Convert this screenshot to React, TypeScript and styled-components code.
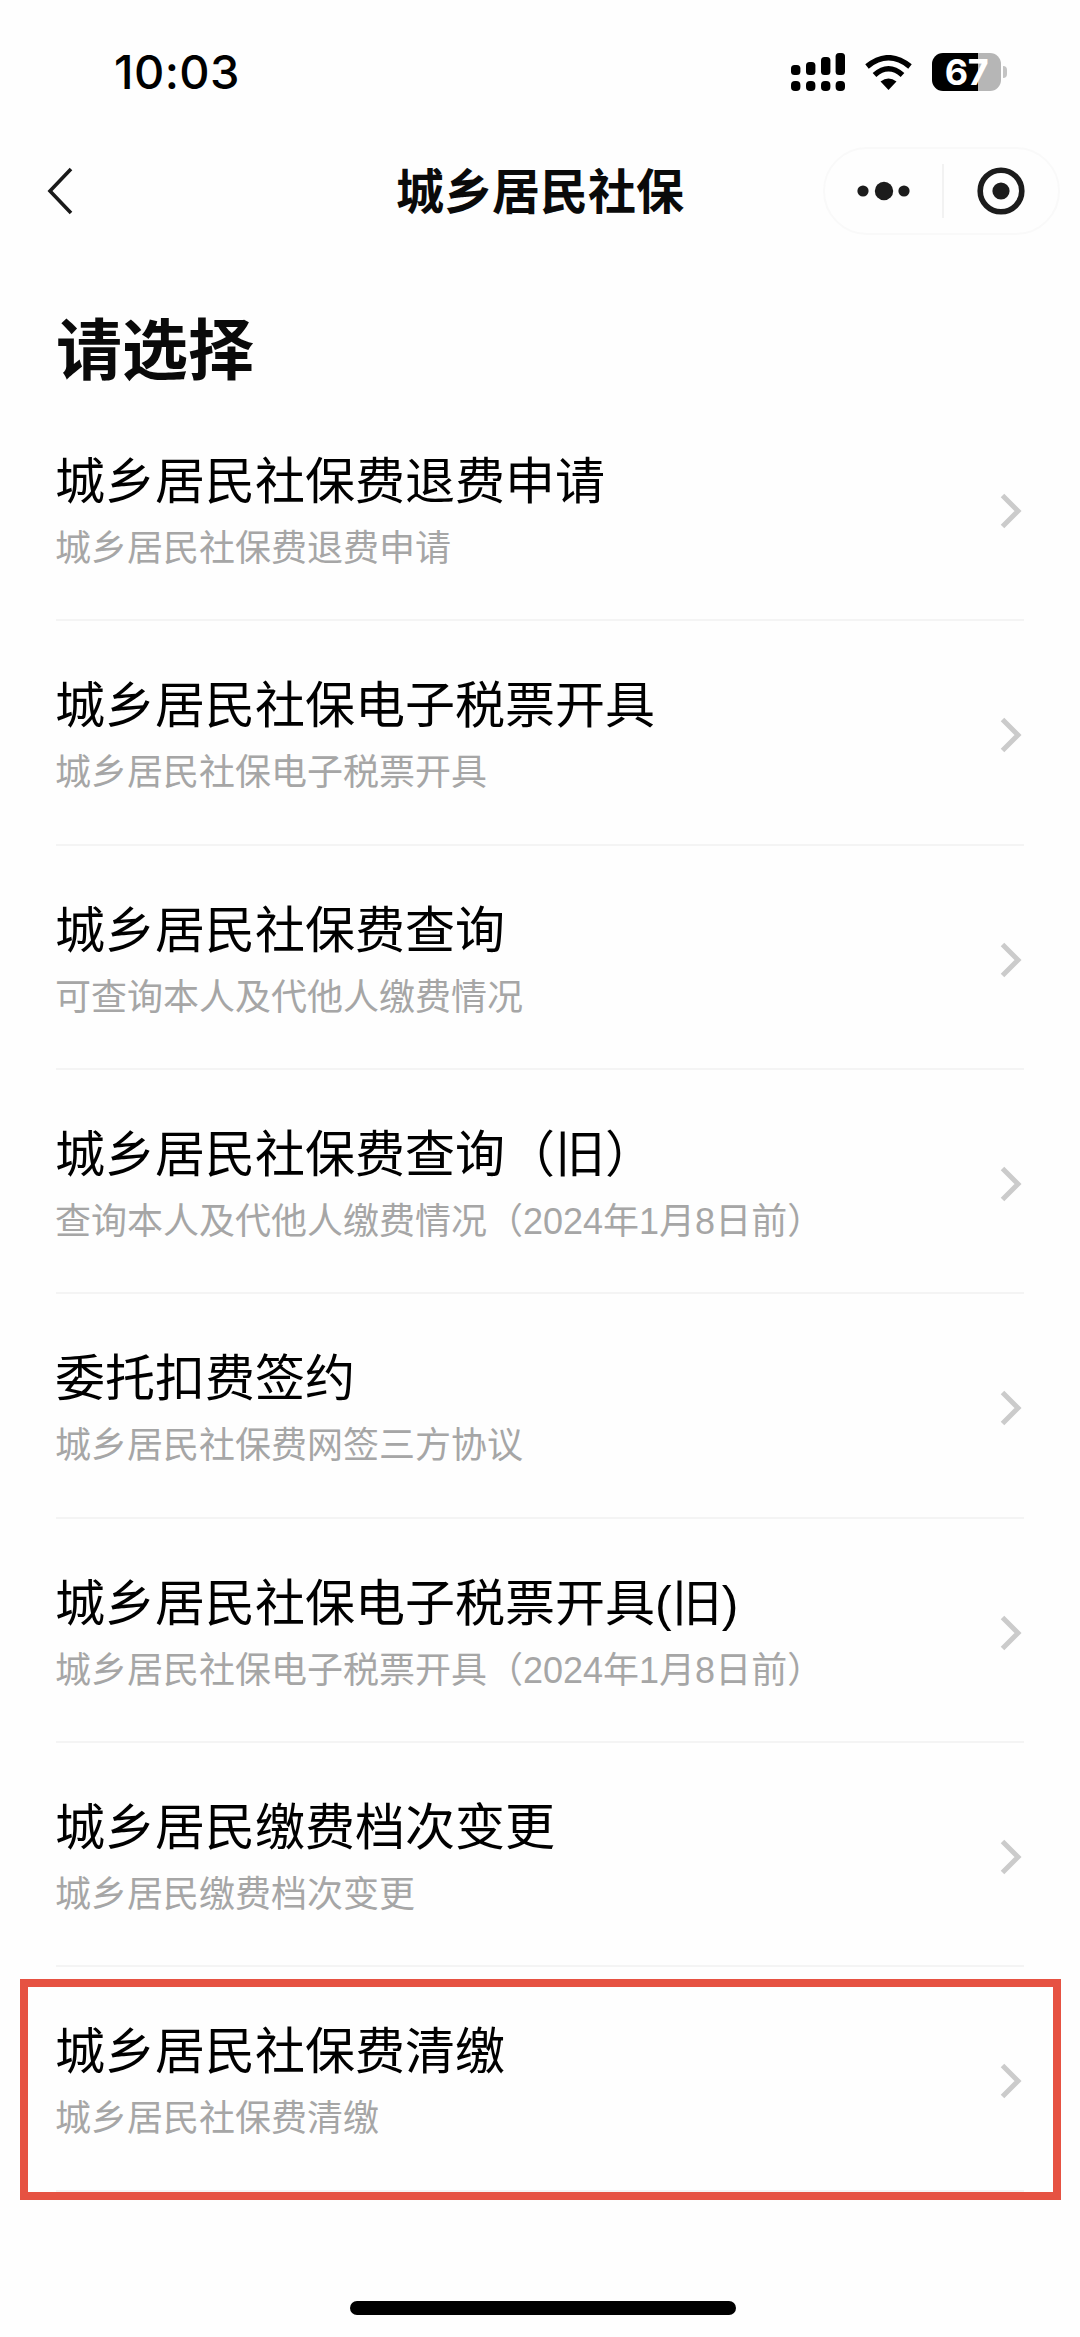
import React from "react";
import styled, { createGlobalStyle } from "styled-components";

const Global = createGlobalStyle`
  html, body { margin: 0; padding: 0; background: #fefefe; }
  * { box-sizing: border-box; }
  body { font-family: "Liberation Sans", "Noto Sans CJK SC", sans-serif; }
`;

const Page = styled.div`
  width: 1080px;
  height: 2337px;
  background: #fefefe;
  overflow: hidden;
  position: relative;
  display: flex;
  flex-direction: column;
`;

const StatusBar = styled.div`
  height: 144px;
  padding: 0 73px 2px 114px;
  display: flex;
  align-items: center;
  justify-content: space-between;
`;

const Time = styled.span`
  font-family: Inter, "Liberation Sans", sans-serif;
  font-size: 47px;
  font-weight: 500;
  letter-spacing: 0.4px;
  color: #000;
`;

const StatusIcons = styled.div`
  display: flex;
  align-items: center;
  gap: 20px;
  margin-top: 2px;
`;

const SignalSvg = styled.svg`
  width: 54px;
  height: 38px;
  display: block;
`;

const WifiSvg = styled.svg`
  width: 47px;
  height: 35px;
  display: block;
`;

const BatteryWrap = styled.div`
  display: flex;
  align-items: center;
  gap: 2px;
`;

const BatteryBody = styled.div<{ $level: number }>`
  width: 69px;
  height: 38px;
  border-radius: 11px;
  background: linear-gradient(90deg, #000 ${(p) => p.$level}%, #b6b6b6 ${(p) => p.$level}%);
  display: flex;
  align-items: center;
  justify-content: center;
  color: #fff;
  font-family: Inter, "Liberation Sans", sans-serif;
  font-size: 36px;
  font-weight: 700;
  letter-spacing: -0.5px;
  line-height: 38px;
`;

const BatteryNub = styled.div`
  width: 4px;
  height: 12px;
  border-radius: 0 6px 6px 0;
  background: #c4c4c4;
`;

const NavBar = styled.div`
  height: 94px;
  padding: 0 20px;
  display: grid;
  grid-template-columns: 1fr auto 1fr;
  align-items: center;
`;

const BackSvg = styled.svg`
  width: 34px;
  height: 52px;
  display: block;
  margin-left: 24px;
`;

const NavTitle = styled.div`
  font-size: 48px;
  font-weight: 700;
  color: #0a0a0a;
  line-height: 60px;
  padding-top: 3px;
`;

const Capsule = styled.div`
  justify-self: end;
  width: 237px;
  height: 88px;
  border: 2px solid #f9f9f9;
  border-radius: 44px;
  display: flex;
  align-items: center;
`;

const MoreCell = styled.div`
  width: 117px;
  display: flex;
  align-items: center;
  justify-content: center;
`;

const CloseCell = styled.div`
  flex: 1;
  display: flex;
  align-items: center;
  justify-content: center;
`;

const CapsuleDivider = styled.div`
  width: 2px;
  height: 54px;
  background: #f2f2f2;
`;

const CapsuleSvg = styled.svg`
  display: block;
`;

const Heading = styled.h1`
  margin: 0;
  height: 159px;
  padding: 71px 0 0 56px;
  font-size: 66px;
  line-height: 84px;
  font-weight: 700;
  color: #0a0a0a;
`;

const List = styled.div`
  display: flex;
  flex-direction: column;
`;

const Row = styled.div`
  position: relative;
  height: 224.33px;
  margin: 0 56px;
  padding: 52px 0 0;
  display: flex;
  align-items: flex-start;
  justify-content: space-between;
  border-bottom: 2px solid #f4f4f4;
`;

const RowText = styled.div`
  display: flex;
  flex-direction: column;
  margin-left: -1px;
`;

const RowTitle = styled.div`
  font-size: 50px;
  line-height: 66px;
  color: #000;
`;

const RowSub = styled.div`
  font-size: 36px;
  line-height: 67px;
  color: #a6a6a6;
`;

const ChevronSvg = styled.svg`
  width: 23px;
  height: 36px;
  display: block;
  margin: 44px 2px 0 0;
  flex-shrink: 0;
`;

const Highlight = styled.div`
  position: absolute;
  left: -36px;
  right: -37px;
  top: 12px;
  height: 221px;
  border: 8px solid #e65242;
  pointer-events: none;
`;

const HomeBar = styled.div`
  position: absolute;
  left: 350px;
  top: 2301px;
  width: 386px;
  height: 14px;
  border-radius: 7px;
  background: #000;
`;

const rows = [
  ["城乡居民社保费退费申请", "城乡居民社保费退费申请"],
  ["城乡居民社保电子税票开具", "城乡居民社保电子税票开具"],
  ["城乡居民社保费查询", "可查询本人及代他人缴费情况"],
  ["城乡居民社保费查询（旧）", "查询本人及代他人缴费情况（2024年1月8日前）"],
  ["委托扣费签约", "城乡居民社保费网签三方协议"],
  ["城乡居民社保电子税票开具(旧)", "城乡居民社保电子税票开具（2024年1月8日前）"],
  ["城乡居民缴费档次变更", "城乡居民缴费档次变更"],
  ["城乡居民社保费清缴", "城乡居民社保费清缴"],
];

export default function App() {
  return (
    <Page>
      <Global />
      <StatusBar>
        <Time>10:03</Time>
        <StatusIcons>
          <SignalSvg viewBox="0 0 54 38">
            <rect x="0" y="12" width="9.4" height="10" rx="3.5" />
            <rect x="15" y="9" width="9.4" height="13" rx="3.5" />
            <rect x="30" y="4" width="9.4" height="18" rx="3.5" />
            <rect x="44.6" y="0" width="9.4" height="22" rx="3.5" />
            <rect x="0" y="28" width="9.4" height="10" rx="4" />
            <rect x="15" y="28" width="9.4" height="10" rx="4" />
            <rect x="30" y="28" width="9.4" height="10" rx="4" />
            <rect x="44.6" y="28" width="9.4" height="10" rx="4" />
          </SignalSvg>
          <WifiSvg viewBox="0 0 47 35">
            <path d="M23.5 35L15.5 26.5Q23.5 20.5 31.5 26.5Z" fill="#000" />
            <path d="M9.5 20Q23.5 7.5 37.5 20" fill="none" stroke="#000" strokeWidth="5.5" />
            <path d="M2 11.5Q23.5 -6 45 11.5" fill="none" stroke="#000" strokeWidth="5.5" />
          </WifiSvg>
          <BatteryWrap>
            <BatteryBody $level={67}>67</BatteryBody>
            <BatteryNub />
          </BatteryWrap>
        </StatusIcons>
      </StatusBar>
      <NavBar>
        <BackSvg viewBox="0 0 34 52">
          <path d="M27 4L6 26L27 48" fill="none" stroke="#1a1a1a" strokeWidth="3.6" />
        </BackSvg>
        <NavTitle>城乡居民社保</NavTitle>
        <Capsule>
          <MoreCell>
            <CapsuleSvg width="54" height="20" viewBox="0 0 54 20">
              <circle cx="6" cy="10" r="5.6" fill="#1c1c1c" />
              <circle cx="27" cy="10" r="9.2" fill="#1c1c1c" />
              <circle cx="47" cy="10" r="5.6" fill="#1c1c1c" />
            </CapsuleSvg>
          </MoreCell>
          <CapsuleDivider />
          <CloseCell>
            <CapsuleSvg width="48" height="48" viewBox="0 0 48 48">
              <circle cx="24" cy="24" r="20.8" fill="none" stroke="#1c1c1c" strokeWidth="5.6" />
              <circle cx="24" cy="24" r="8.6" fill="#1c1c1c" />
            </CapsuleSvg>
          </CloseCell>
        </Capsule>
      </NavBar>
      <Heading>请选择</Heading>
      <List>
        {rows.map(([title, sub], i) => (
          <Row key={title}>
            <RowText>
              <RowTitle>{title}</RowTitle>
              <RowSub>{sub}</RowSub>
            </RowText>
            <ChevronSvg viewBox="0 0 23 36">
              <path d="M3.5 2.5L19 18L3.5 33.5" fill="none" stroke="#cbcbcb" strokeWidth="5" />
            </ChevronSvg>
            {i === rows.length - 1 && <Highlight />}
          </Row>
        ))}
      </List>
      <HomeBar />
    </Page>
  );
}
